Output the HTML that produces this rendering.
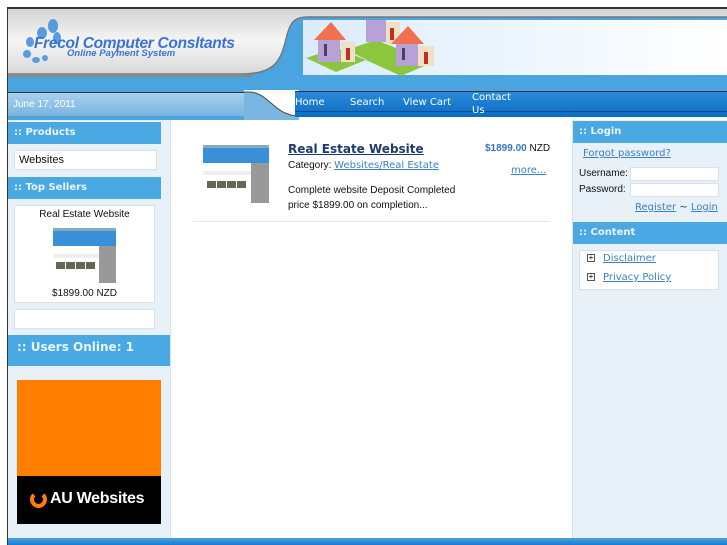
<!DOCTYPE html>
<html><head><meta charset="utf-8"><style>
*{margin:0;padding:0;box-sizing:border-box}
body{width:727px;height:545px;overflow:hidden;background:#fff;font-family:"DejaVu Sans","Liberation Sans",sans-serif;position:relative}
.abs{position:absolute}
.hd{background:#4aa8e2;color:#e8f4ff;font-weight:bold;font-size:10px;padding-left:6px;line-height:22px}
a{color:#3b82c4;text-decoration:underline}
.box{background:#fff;border:1px solid #d6e2ee}
.sm{font-family:"Liberation Sans",sans-serif;font-size:10px;color:#111}
.th{background:linear-gradient(#8ab 0,#8ab 3px,#3a90d8 3px,#3a90d8 18px,#fff 18px,#fff 26px,#eee 26px,#eee 30px,#fff 30px);overflow:hidden}
.th i{position:absolute;background:#665;width:9px;height:7px}
</style></head><body>
<div class="abs" style="left:7px;top:7px;width:720px;height:2px;background:#333"></div>
<div class="abs" style="left:7px;top:7px;width:1px;height:538px;background:#333"></div>
<div class="abs" style="left:8px;top:75px;width:719px;height:17px;background:#4aa4e0"></div>
<!-- header -->
<svg class="abs" style="left:8px;top:9px" width="719" height="70">
<defs><linearGradient id="g" x1="0" y1="0" x2="0" y2="1"><stop offset="0" stop-color="#d4d4d4"/><stop offset=".5" stop-color="#f6f6f6"/><stop offset="1" stop-color="#d8d8d8"/></linearGradient></defs>
<rect width="719" height="70" fill="#4aa4e0"/>
<path d="M0 0 H719 V8 H300 C285 8 282 14 278 30 C272 55 265 64 235 65 H0 Z" fill="url(#g)"/>
<path d="M0 65 H235 C265 64 272 55 278 30 C282 14 285 8 300 8 H719" stroke="#777" stroke-width="1.5" fill="none"/>
<rect x="0" y="65" width="245" height="3" fill="#888"/>
</svg>
<div class="abs" style="left:303px;top:20px;width:424px;height:55px;background:linear-gradient(90deg,#dcecfc,#ffffff)"></div>
<svg class="abs" style="left:306px;top:20px" width="160" height="56">
<polygon points="0,38 30,28 60,40 30,52" fill="#8cc63f"/><polygon points="40,30 70,20 100,32 70,44" fill="#8cc63f"/><polygon points="60,40 90,30 125,43 95,56" fill="#8cc63f"/>
<rect x="60" y="0" width="20" height="22" fill="#b8a0d8"/><rect x="80" y="2" width="14" height="22" fill="#f0e0c8"/><rect x="84" y="8" width="4" height="12" fill="#c03020"/>
<rect x="12" y="18" width="22" height="24" fill="#b8a0d8"/><polygon points="8,20 25,2 40,20" fill="#f07050"/><rect x="35" y="22" width="14" height="20" fill="#f0e0c8"/><rect x="40" y="28" width="4" height="12" fill="#c03020"/><rect x="18" y="24" width="3" height="12" fill="#445"/>
<rect x="90" y="22" width="22" height="24" fill="#b8a0d8"/><polygon points="85,24 102,6 118,24" fill="#f07050"/><rect x="112" y="26" width="16" height="20" fill="#f0e0c8"/><rect x="118" y="32" width="4" height="12" fill="#c03020"/><rect x="96" y="28" width="3" height="12" fill="#445"/>
</svg>
<!-- logo -->
<svg class="abs" style="left:20px;top:18px" width="42" height="46"><g fill="#5a9ae0"><ellipse cx="33" cy="8" rx="5" ry="7"/><ellipse cx="22" cy="15" rx="5" ry="6"/><ellipse cx="37" cy="20" rx="4" ry="6"/><ellipse cx="10" cy="24" rx="4" ry="5"/><ellipse cx="7" cy="36" rx="4" ry="4"/><ellipse cx="16" cy="42" rx="4" ry="3"/><ellipse cx="25" cy="40" rx="3" ry="3"/></g></svg>
<div class="abs" style="left:34px;top:35px;font:italic bold 15.5px 'Liberation Sans',sans-serif;color:#3a72d8;letter-spacing:-0.3px">Frecol Computer Consltants</div>
<div class="abs" style="left:67px;top:48px;font:italic bold 9.5px 'Liberation Sans',sans-serif;color:#3a72d8">Online Payment System</div>
<!-- nav row -->
<div class="abs" style="left:8px;top:92px;width:236px;height:24px;background:linear-gradient(#a8d0ee,#78b4e0);border-top:1px solid #333"></div>
<div class="abs" style="left:8px;top:116px;width:236px;height:4px;background:#4aa4e0"></div>
<svg class="abs" style="left:244px;top:90px" width="55" height="30"><rect width="55" height="30" fill="#fff"/><path d="M0 2 H5 C25 2 30 26 55 26 V30 H0Z" fill="#7ab6e2"/><path d="M0 2 H5 C25 2 30 26 55 26" stroke="#444" fill="none"/></svg>
<div class="abs" style="left:295px;top:91px;width:432px;height:26px;background:linear-gradient(#2a8ad8,#0a6cc4);border-top:1px solid #333"></div>
<div class="abs" style="left:295px;top:111px;width:432px;height:1px;background:#0a4a90"></div>
<div class="abs" style="left:13px;top:99px;font:10px 'Liberation Sans',sans-serif;color:#fff">June 17, 2011</div>
<div class="abs" style="left:295px;top:97px;font:10px 'DejaVu Sans',sans-serif;color:#fff">Home</div>
<div class="abs" style="left:350px;top:97px;font:10px 'DejaVu Sans',sans-serif;color:#fff">Search</div>
<div class="abs" style="left:403px;top:97px;font:10px 'DejaVu Sans',sans-serif;color:#fff">View Cart</div>
<div class="abs" style="left:472px;top:91px;font:10px/13px 'DejaVu Sans',sans-serif;color:#fff;height:24px;overflow:hidden">Contact<br>Us</div>
<!-- columns -->
<div class="abs" style="left:8px;top:120px;width:163px;height:418px;background:#e8f0f8;border-right:1px solid #d6e2ee"></div>
<div class="abs" style="left:572px;top:120px;width:155px;height:418px;background:#e8f0f8;border-left:1px solid #d6e2ee"></div>
<div class="abs" style="left:8px;top:538px;width:719px;height:7px;background:linear-gradient(#4aa4e0,#1a7ad0)"></div>
<!-- left -->
<div class="abs hd" style="left:8px;top:122px;width:153px">:: Products</div>
<div class="abs box" style="left:14px;top:150px;width:143px;height:20px;font:11px/18px 'Liberation Sans',sans-serif;padding-left:4px;color:#111">Websites</div>
<div class="abs hd" style="left:8px;top:177px;width:153px">:: Top Sellers</div>
<div class="abs box" style="left:14px;top:205px;width:141px;height:98px"></div>
<div class="abs sm" style="left:14px;top:209px;width:141px;text-align:center">Real Estate Website</div>
<div class="abs th" style="left:53px;top:228px;width:63px;height:55px"><i style="left:3px;top:34px"></i><i style="left:13px;top:34px"></i><i style="left:23px;top:34px"></i><i style="left:33px;top:34px"></i><b style="position:absolute;left:46px;top:18px;width:17px;height:37px;background:#999"></b></div>
<div class="abs sm" style="left:14px;top:288px;width:141px;text-align:center">$1899.00 NZD</div>
<div class="abs box" style="left:14px;top:309px;width:141px;height:20px"></div>
<div class="abs hd" style="left:8px;top:335px;width:162px;height:31px;font-size:12px;line-height:24px;padding-left:9px">:: Users Online: 1</div>
<div class="abs" style="left:17px;top:380px;width:144px;height:96px;background:#ff7e00"></div>
<div class="abs" style="left:17px;top:476px;width:144px;height:48px;background:#000"></div>
<div class="abs" style="left:30px;top:491px;width:17px;height:17px;border-radius:50%;border:4px solid #ff7e00;border-top-color:transparent"></div>
<div class="abs" style="left:50px;top:490px;font:bold 16px 'Liberation Sans',sans-serif;color:#fff;letter-spacing:-0.3px">AU Websites</div>
<!-- center -->
<div class="abs th" style="left:203px;top:145px;width:66px;height:58px"><i style="left:4px;top:36px"></i><i style="left:14px;top:36px"></i><i style="left:24px;top:36px"></i><i style="left:34px;top:36px"></i><b style="position:absolute;left:48px;top:18px;width:18px;height:40px;background:#999"></b></div>
<div class="abs" style="left:288px;top:142px;font:bold 12px 'DejaVu Sans',sans-serif;color:#1a3a70;text-decoration:underline">Real Estate Website</div>
<div class="abs sm" style="left:288px;top:160px">Category: <a style="font-family:'DejaVu Sans',sans-serif;font-size:10px">Websites/Real Estate</a></div>
<div class="abs" style="left:485px;top:143px;font:10px 'Liberation Sans',sans-serif;color:#111"><b style="color:#3b72c4">$1899.00</b> NZD</div>
<div class="abs" style="left:511px;top:165px;font:10px 'DejaVu Sans',sans-serif"><a>more...</a></div>
<div class="abs sm" style="left:288px;top:183px;line-height:15px">Complete website Deposit Completed<br>price $1899.00 on completion...</div>
<div class="abs" style="left:193px;top:221px;width:357px;height:1px;background:#dde6ee"></div>
<!-- right -->
<div class="abs hd" style="left:573px;top:121px;width:154px">:: Login</div>
<div class="abs" style="left:583px;top:148px;font:10px 'DejaVu Sans',sans-serif"><a>Forgot password?</a></div>
<div class="abs sm" style="left:579px;top:168px">Username:</div>
<div class="abs sm" style="left:579px;top:184px">Password:</div>
<div class="abs box" style="left:630px;top:167px;width:89px;height:14px"></div>
<div class="abs box" style="left:630px;top:183px;width:89px;height:14px"></div>
<div class="abs" style="left:635px;top:202px;font:10px 'DejaVu Sans',sans-serif;color:#333"><a>Register</a> ~ <a>Login</a></div>
<div class="abs hd" style="left:573px;top:222px;width:154px">:: Content</div>
<div class="abs box" style="left:579px;top:250px;width:140px;height:40px"></div>
<div class="abs" style="left:587px;top:254px;width:8px;height:8px;border:1px solid #555;font:8px/6px sans-serif;text-align:center">+</div>
<div class="abs" style="left:587px;top:273px;width:8px;height:8px;border:1px solid #555;font:8px/6px sans-serif;text-align:center">+</div>
<div class="abs" style="left:603px;top:253px;font:10px 'DejaVu Sans',sans-serif"><a>Disclaimer</a></div>
<div class="abs" style="left:603px;top:272px;font:10px 'DejaVu Sans',sans-serif"><a>Privacy Policy</a></div>
</body></html>
